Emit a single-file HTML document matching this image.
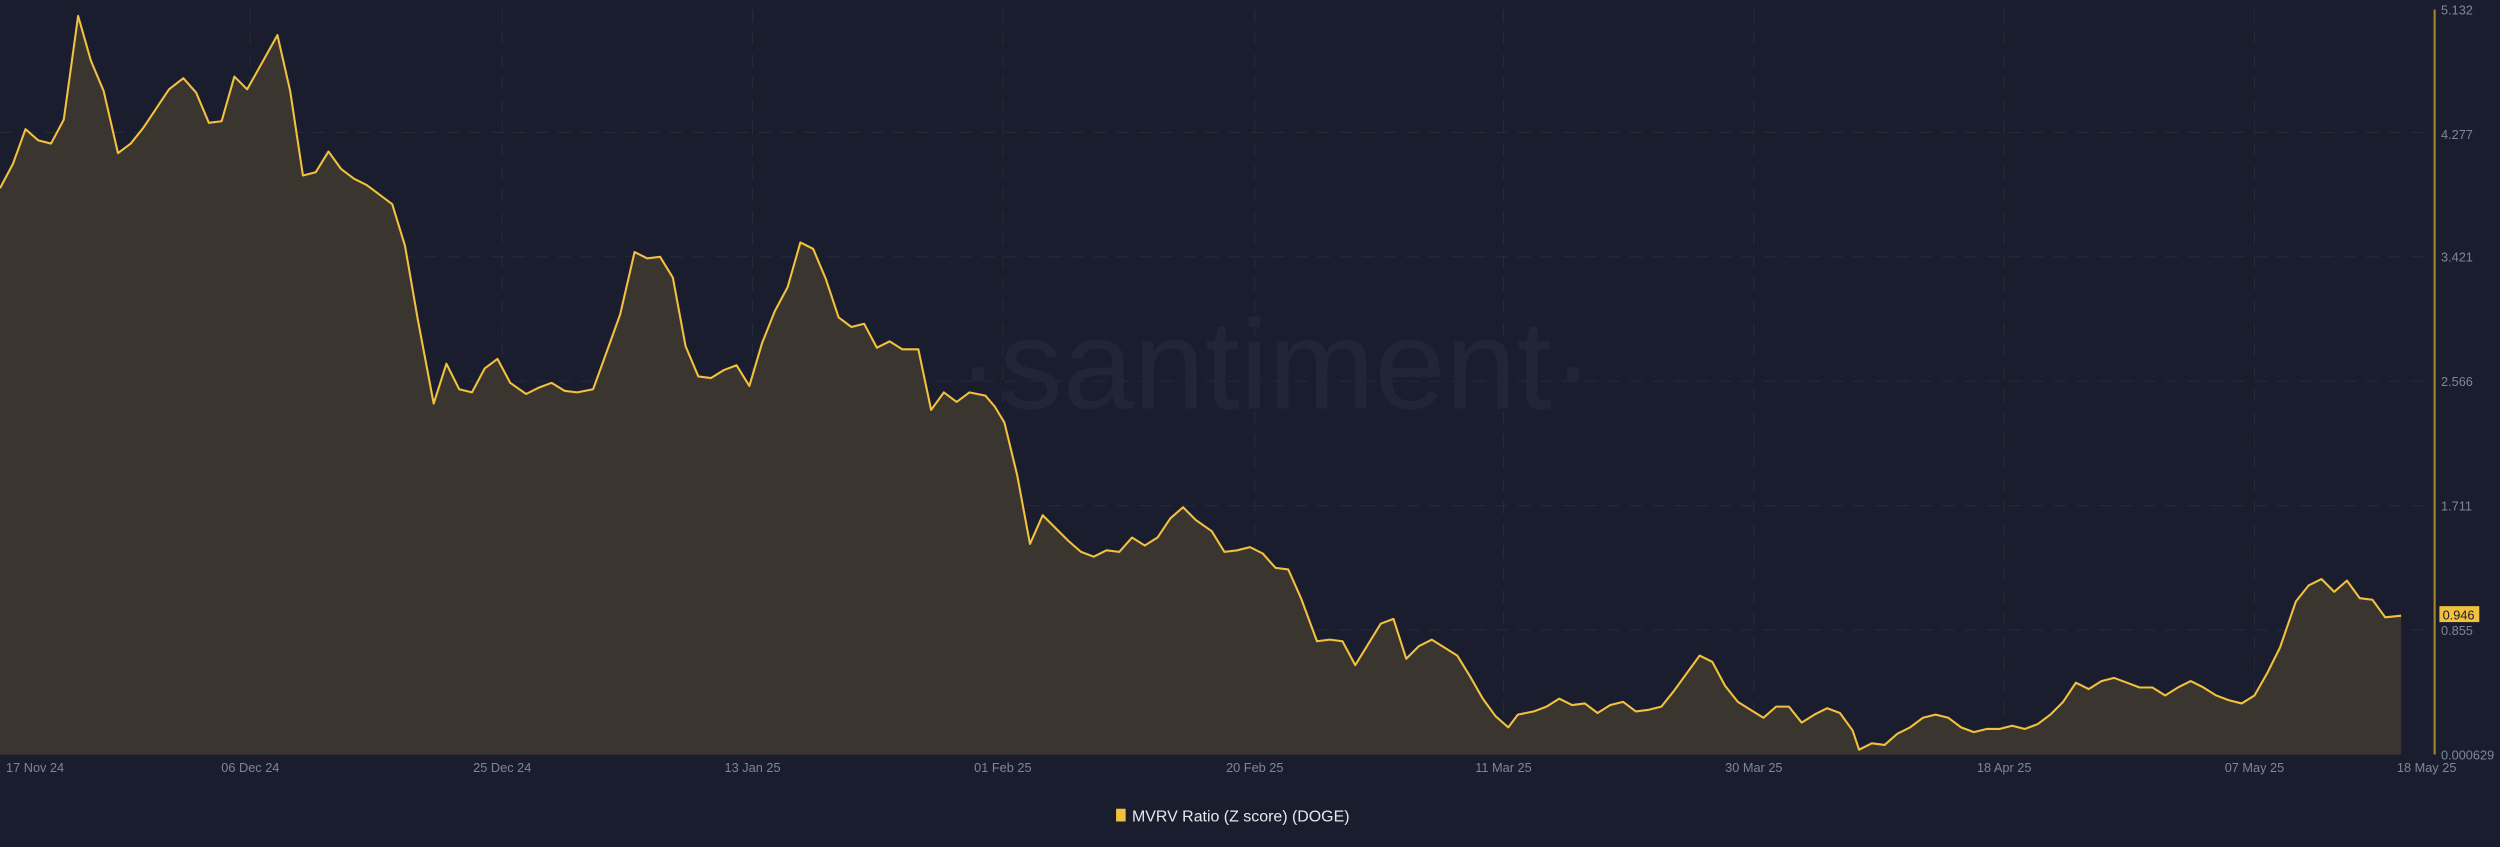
<!DOCTYPE html>
<html><head><meta charset="utf-8"><style>
html,body{margin:0;padding:0;background:#1a1d2e;}
svg{display:block;}
text{font-family:"Liberation Sans",sans-serif;}
</style></head><body>
<svg width="2500" height="847" viewBox="0 0 1568 531" preserveAspectRatio="none" xmlns="http://www.w3.org/2000/svg">
<rect width="1568" height="531" fill="#1a1d2e"/>
<g stroke="#252938" stroke-width="0.7" stroke-dasharray="8 6">
<line x1="0" y1="83" x2="1525" y2="83"/><line x1="0" y1="161" x2="1525" y2="161"/>
<line x1="0" y1="239" x2="1525" y2="239"/><line x1="0" y1="317" x2="1525" y2="317"/>
<line x1="0" y1="395" x2="1525" y2="395"/>
<line x1="157" y1="6" x2="157" y2="473"/><line x1="315" y1="6" x2="315" y2="473"/>
<line x1="472" y1="6" x2="472" y2="473"/><line x1="629" y1="6" x2="629" y2="473"/>
<line x1="787" y1="6" x2="787" y2="473"/><line x1="943" y1="6" x2="943" y2="473"/>
<line x1="1100" y1="6" x2="1100" y2="473"/><line x1="1257" y1="6" x2="1257" y2="473"/>
<line x1="1414" y1="6" x2="1414" y2="473"/>
</g>
<text x="800" y="256" font-size="80" fill="#212536" text-anchor="middle">·santiment·</text>
<path fill="#3b352f" stroke="none" d="M0,473 L0,118 L8,103 L16,81 L24,88 L32,90 L40,75 L49,10 L57,38 L65,57 L74,96 L82,90 L90,80 L98,68 L106,56 L115,49 L123,58 L131,77 L139,76 L147,48 L155,56 L164,40 L174,22 L182,57 L190,110 L198,108 L206,95 L214,106 L222,112 L230,116 L238,122 L246,128 L254,154 L262,200 L272,253 L280,228 L288,244 L296,246 L304,231 L312,225 L320,240 L330,247 L338,243 L346,240 L354,245 L362,246 L372,244 L380,222 L389,197 L398,158 L406,162 L414,161 L422,174 L430,217 L438,236 L446,237 L454,232 L462,229 L470,242 L478,215 L486,195 L494,180 L502,152 L510,156 L518,175 L526,199 L534,205 L542,203 L550,218 L558,214 L566,219 L576,219 L584,257 L592,246 L600,252 L608,246 L618,248 L624,255 L630,265 L638,298 L646,341 L654,323 L662,331 L670,339 L678,346 L686,349 L694,345 L702,346 L710,337 L718,342 L726,337 L734,325 L742,318 L750,326 L760,333 L768,346 L776,345 L784,343 L792,347 L800,356 L808,357 L816,375 L826,402 L834,401 L842,402 L850,417 L858,404 L866,391 L874,388 L882,413 L890,405 L898,401 L906,406 L914,411 L922,424 L930,438 L938,449 L946,456 L952,448 L962,446 L970,443 L978,438 L986,442 L994,441 L1002,447 L1010,442 L1018,440 L1026,446 L1034,445 L1042,443 L1050,433 L1058,422 L1066,411 L1074,415 L1082,430 L1090,440 L1098,445 L1106,450 L1114,443 L1122,443 L1130,453 L1138,448 L1146,444 L1154,447 L1162,458 L1166,470 L1174,466 L1182,467 L1190,460 L1198,456 L1206,450 L1214,448 L1222,450 L1230,456 L1238,459 L1246,457 L1254,457 L1262,455 L1270,457 L1278,454 L1286,448 L1294,440 L1302,428 L1310,432 L1318,427 L1326,425 L1334,428 L1342,431 L1350,431 L1358,436 L1366,431 L1374,427 L1382,431 L1390,436 L1398,439 L1406,441 L1414,436 L1422,422 L1430,406 L1440,377 L1448,367 L1456,363 L1464,371 L1472,364 L1480,375 L1488,376 L1496,387 L1506,386 L1506,473 Z"/>
<path fill="none" stroke="#f2c13e" stroke-width="1.3" stroke-linejoin="round" d="M0,118 L8,103 L16,81 L24,88 L32,90 L40,75 L49,10 L57,38 L65,57 L74,96 L82,90 L90,80 L98,68 L106,56 L115,49 L123,58 L131,77 L139,76 L147,48 L155,56 L164,40 L174,22 L182,57 L190,110 L198,108 L206,95 L214,106 L222,112 L230,116 L238,122 L246,128 L254,154 L262,200 L272,253 L280,228 L288,244 L296,246 L304,231 L312,225 L320,240 L330,247 L338,243 L346,240 L354,245 L362,246 L372,244 L380,222 L389,197 L398,158 L406,162 L414,161 L422,174 L430,217 L438,236 L446,237 L454,232 L462,229 L470,242 L478,215 L486,195 L494,180 L502,152 L510,156 L518,175 L526,199 L534,205 L542,203 L550,218 L558,214 L566,219 L576,219 L584,257 L592,246 L600,252 L608,246 L618,248 L624,255 L630,265 L638,298 L646,341 L654,323 L662,331 L670,339 L678,346 L686,349 L694,345 L702,346 L710,337 L718,342 L726,337 L734,325 L742,318 L750,326 L760,333 L768,346 L776,345 L784,343 L792,347 L800,356 L808,357 L816,375 L826,402 L834,401 L842,402 L850,417 L858,404 L866,391 L874,388 L882,413 L890,405 L898,401 L906,406 L914,411 L922,424 L930,438 L938,449 L946,456 L952,448 L962,446 L970,443 L978,438 L986,442 L994,441 L1002,447 L1010,442 L1018,440 L1026,446 L1034,445 L1042,443 L1050,433 L1058,422 L1066,411 L1074,415 L1082,430 L1090,440 L1098,445 L1106,450 L1114,443 L1122,443 L1130,453 L1138,448 L1146,444 L1154,447 L1162,458 L1166,470 L1174,466 L1182,467 L1190,460 L1198,456 L1206,450 L1214,448 L1222,450 L1230,456 L1238,459 L1246,457 L1254,457 L1262,455 L1270,457 L1278,454 L1286,448 L1294,440 L1302,428 L1310,432 L1318,427 L1326,425 L1334,428 L1342,431 L1350,431 L1358,436 L1366,431 L1374,427 L1382,431 L1390,436 L1398,439 L1406,441 L1414,436 L1422,422 L1430,406 L1440,377 L1448,367 L1456,363 L1464,371 L1472,364 L1480,375 L1488,376 L1496,387 L1506,386"/>
<line x1="1527" y1="6" x2="1527" y2="473" stroke="#a8862f" stroke-width="1.3"/>
<g font-size="8" fill="#80859a">
<text x="1531" y="9">5.132</text><text x="1531" y="87">4.277</text>
<text x="1531" y="164">3.421</text><text x="1531" y="242">2.566</text>
<text x="1531" y="320">1.711</text><text x="1531" y="398">0.855</text>
<text x="1531" y="476">0.000629</text>
</g>
<rect x="1530" y="380" width="25" height="10" fill="#f2c13e"/>
<text x="1532" y="388.5" font-size="8" fill="#1a1d2e">0.946</text>
<g font-size="8" fill="#80859a" text-anchor="middle">
<text x="22" y="484">17 Nov 24</text><text x="157" y="484">06 Dec 24</text>
<text x="315" y="484">25 Dec 24</text><text x="472" y="484">13 Jan 25</text>
<text x="629" y="484">01 Feb 25</text><text x="787" y="484">20 Feb 25</text>
<text x="943" y="484">11 Mar 25</text><text x="1100" y="484">30 Mar 25</text>
<text x="1257" y="484">18 Apr 25</text><text x="1414" y="484">07 May 25</text>
<text x="1522" y="484">18 May 25</text>
</g>
<rect x="700" y="507" width="6" height="8" fill="#f2c13e"/>
<text x="710" y="515" font-size="10" fill="#e6e7ec">MVRV Ratio (Z score) (DOGE)</text>
</svg>
</body></html>
